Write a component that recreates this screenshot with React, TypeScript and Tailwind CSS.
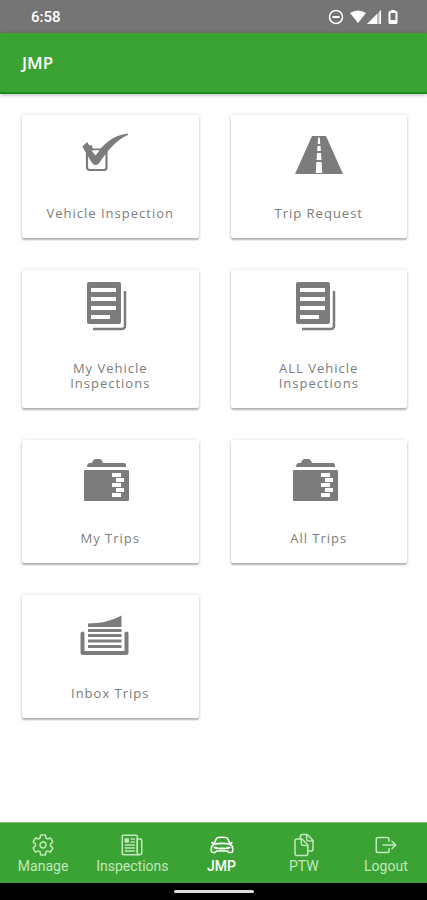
import type { ReactNode } from "react";
import {
    IoDocumentsOutline,
    IoExitOutline,
    IoNewspaperOutline,
    IoSettingsOutline,
} from "react-icons/io5";

const CheckIcon = () => (
    <svg viewBox="0 0 50 50" className="size-[50px] overflow-visible" fill="currentColor">
        <rect x="2" y="22.500" width="19.500" height="20.500" rx="2.500" fill="none" stroke="currentColor" strokeWidth="2.200" />
        <path d="M-2.500 19.500l4.500-4.500 2.500 3.500 2-.5 4 10C17 19 27 8 43 6.500v1.500C31 13 23 23 13.500 37q-3 2-5.500 0C4.500 33 2 27-.5 23.500z" />
        <path d="M6.500 23.600h8l-4 5z" fill="white" />
    </svg>
);

const RoadIcon = () => (
    <svg viewBox="0 0 50 50" className="size-[50px]" fill="currentColor">
        <path d="M18 9h14l17 38H1z" />
        <path
            d="M24.200 10.500h1.600l.5 6.500h-2.600zM23.500 19h3l.4 5h-3.800zM23 26h4l.5 7h-5zM22.400 35h5.200l.6 11h-6.400z"
            fill="white"
        />
    </svg>
);

const DocumentsIcon = () => (
    <svg viewBox="0 0 50 50" className="size-[50px]" fill="currentColor">
        <path
            fillRule="evenodd"
            d="M4 0h30a2 2 0 0 1 2 2v38a2 2 0 0 1-2 2H4a2 2 0 0 1-2-2V2a2 2 0 0 1 2-2zM6 6v4h25V6zM6 15v4h25v-4zM6 24v4h25v-4zM6 33v4h19v-4z"
        />
        <path d="M40 9v35a3 3 0 0 1-3 3H8" fill="none" stroke="currentColor" strokeWidth="2.500" />
    </svg>
);

const FolderIcon = () => (
    <svg viewBox="0 0 50 50" className="size-[50px] overflow-visible" fill="currentColor">
        <path d="M2 15q0-4 3-4h2q1-4 4-4h3q3 0 4 4h21q2 0 2 2v2z" />
        <path
            fillRule="evenodd"
            d="M0 18h43q1 0 1 1v29q0 1-1 1H0q-1 0-1-1V19q0-1 1-1zM27 21v4h9v-4zM31 26v4h8v-4zM27 31v4h9v-4zM31 36v4h8v-4zM27 41v4h9v-4z"
        />
    </svg>
);

const InboxIcon = () => (
    <svg viewBox="0 0 50 50" className="size-[50px] overflow-visible" fill="currentColor">
        <path d="M3 16.500Q22 16.500 36.500 8.500V20H3zM3 22h33.500v3H3zM3 27h33.500v3H3zM3 32.500h33.500v3H3zM3 38h33.500v3H3z" />
        <path
            d="M-2.500 26.500V46h44V26.500"
            fill="none"
            stroke="currentColor"
            strokeWidth="4"
            strokeLinejoin="round"
            strokeLinecap="round"
        />
    </svg>
);

const CarIcon = ({ size }: { size: number }) => (
    <svg viewBox="0 0 24 24" width={size} height={size} fill="none" stroke="currentColor" strokeWidth="1.600" strokeLinejoin="round" strokeLinecap="round">
        <path d="M4 11L6.200 6Q6.800 4.600 8.300 4.500q3.700-.4 7.400 0Q17.200 4.600 17.800 6L20 11" />
        <path d="M2 9.500l2 1.500Q12 9.800 20 11l2-1.500" />
        <path d="M4 11Q1.300 12.800 1.300 15.500V18q0 1.500 1.500 1.500h2.400L6.500 18h11l1.300 1.500h2.400q1.500 0 1.500-1.500v-2.500Q22.700 12.800 20 11" />
        <path d="M4.500 14.500l3 .7M19.500 14.500l-3 .7M9.500 15.500h5" strokeWidth="2" />
    </svg>
);

interface MenuCardProps {
    icon: ReactNode
    label: string
}

function MenuCard({ icon, label }: MenuCardProps) {
    return (
        <button className="flex flex-col items-center rounded-[2px] bg-white px-5 pt-3 pb-[17px] text-[#7c7c7c] shadow-[0_2px_2px_rgba(0,0,0,0.28),0_0_4px_rgba(0,0,0,0.12)]">
            {icon}
            <span className="mt-[29px] text-[13px] leading-[15px] tracking-[1px]">{label}</span>
        </button>
    )
}

const cards = [
    { label: "Vehicle Inspection", icon: <CheckIcon /> },
    { label: "Trip Request", icon: <RoadIcon /> },
    { label: "My Vehicle Inspections", icon: <DocumentsIcon /> },
    { label: "ALL Vehicle Inspections", icon: <DocumentsIcon /> },
    { label: "My Trips", icon: <FolderIcon /> },
    { label: "All Trips", icon: <FolderIcon /> },
    { label: "Inbox Trips", icon: <InboxIcon /> },
];

const tabs = [
    { label: "Manage", Icon: IoSettingsOutline },
    { label: "Inspections", Icon: IoNewspaperOutline },
    { label: "JMP", Icon: CarIcon },
    { label: "PTW", Icon: IoDocumentsOutline },
    { label: "Logout", Icon: IoExitOutline },
];

function StatusBar() {
    return (
        <div className="flex h-[33px] items-center justify-between bg-[#757575] pt-px pr-[29px] pl-[31px] text-white">
            <span className="font-['Roboto',sans-serif] text-[15px] font-medium">6:58</span>
            <div className="flex items-center gap-[6px]">
                <svg viewBox="0 0 16 16" className="size-4" fill="none" stroke="currentColor" strokeWidth="1.500">
                    <circle cx="8" cy="8" r="6.500" />
                    <path d="M4.500 8h7" strokeWidth="2" />
                </svg>
                <svg viewBox="0 0 32 16" className="h-4 w-8" fill="currentColor">
                    <path d="M0 4Q8-1 16 4L8 14z" />
                    <path d="M17 15L31 1v14z" opacity="0.500" />
                    <path d="M17 15L27 5v10zM29.500 2.500L31 1v14h-1.500z" />
                </svg>
                <svg viewBox="0 0 10 16" className="h-4 w-[10px]" fill="currentColor">
                    <path fillRule="evenodd" d="M3 1h4v1h1q1.500 0 1.500 1.500v10Q9.500 15 8 15H2Q.5 15 .5 13.500v-10Q.5 2 2 2h1zM2.500 4v7h5V4z" />
                </svg>
            </div>
        </div>
    )
}

export default function App() {
    return (
        <div className="flex min-h-screen flex-col bg-white font-['Open_Sans',sans-serif]">
            <StatusBar />
            <header className="flex h-[61px] items-center border-b-2 border-[#159018] bg-[#3ba334] px-[22px] pt-px shadow-[0_1px_4px_rgba(0,0,0,0.3)]">
                <h1 className="text-[17px] font-semibold text-white">JMP</h1>
            </header>
            <main className="grid flex-1 grid-cols-2 content-start gap-8 pt-[21px] pr-5 pb-8 pl-[22px]">
                {cards.map((card) => (
                    <MenuCard key={card.label} icon={card.icon} label={card.label} />
                ))}
            </main>
            <nav className="flex h-[61px] border-t border-[#7cc078] bg-[#3ba334] pl-[2px] font-['Roboto',sans-serif]">
                {tabs.map(({ label, Icon }) => (
                    <button
                        key={label}
                        className={`flex flex-1 flex-col items-center px-3 pt-[10px] text-[14px] leading-[18px] ${label === "JMP" ? "font-medium text-white" : "text-[#c4e8bd]"}`}
                    >
                        <Icon size={24} />
                        {label}
                    </button>
                ))}
            </nav>
            <div className="flex h-[17px] items-center justify-center bg-black">
                <div className="h-[3px] w-20 rounded-full bg-[#dddddd]" />
            </div>
        </div>
    )
}
